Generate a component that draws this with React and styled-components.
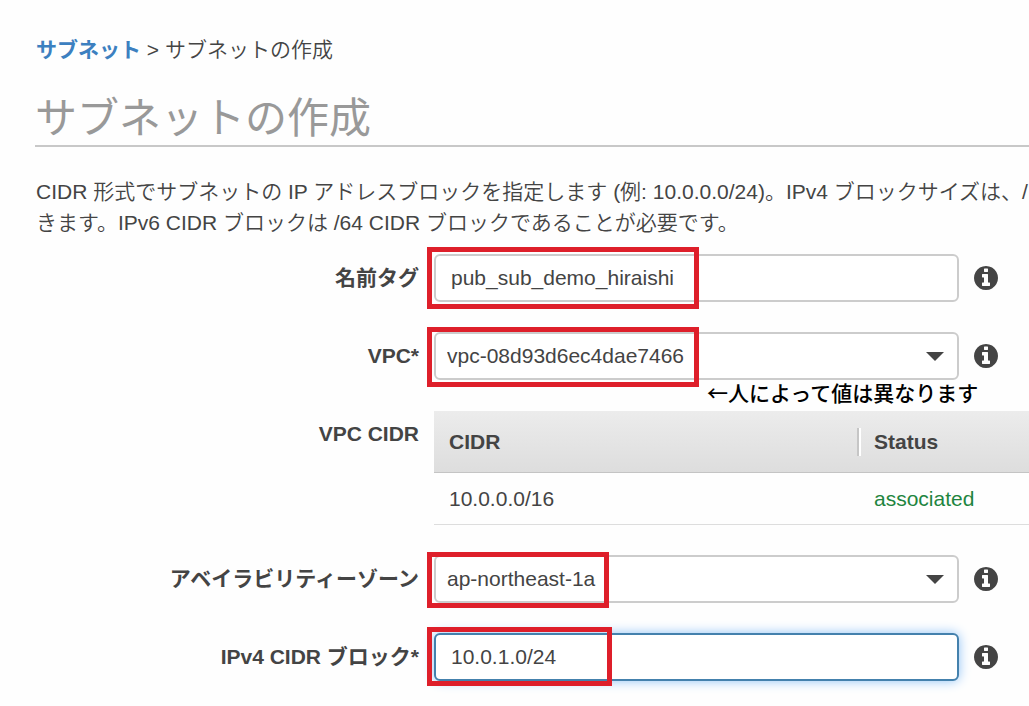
import { React, useState } from "react";
import styled, { createGlobalStyle, css } from "styled-components";

const App = () => {
  const [nameTag, setNameTag] = useState("pub_sub_demo_hiraishi");
  const [vpc, setVpc] = useState("vpc-08d93d6ec4dae7466");
  const [zone, setZone] = useState("ap-northeast-1a");
  const [cidrBlock, setCidrBlock] = useState("10.0.1.0/24");

  return (
    <>
      <GlobalStyle />
      <Page>
        {/* パンくずリスト */}
        <Breadcrumb>
          <BreadcrumbLink href="#subnets">サブネット</BreadcrumbLink> &gt; サブネットの作成
        </Breadcrumb>
        <Headline>サブネットの作成</Headline>
        {/* 説明文 */}
        <Description>
          CIDR 形式でサブネットの IP アドレスブロックを指定します (例: 10.0.0.0/24)。IPv4 ブロックサイズは、/
          <br />
          きます。IPv6 CIDR ブロックは /64 CIDR ブロックであることが必要です。
        </Description>

        <Form>
          {/* 名前タグ */}
          <Label htmlFor="name-tag">名前タグ</Label>
          <Field>
            <Control>
              <TextInput id="name-tag" value={nameTag} onChange={(e) => setNameTag(e.target.value)} />
              <Highlight $top={-7} $width={272} $height={62} />
            </Control>
            <InfoButton />
          </Field>

          {/* VPC */}
          <Label htmlFor="vpc">VPC*</Label>
          <Field>
            <Control>
              <Select id="vpc" value={vpc} onChange={(e) => setVpc(e.target.value)}>
                <option>vpc-08d93d6ec4dae7466</option>
              </Select>
              <Caret />
              <Highlight $top={-5} $width={272} $height={60} />
              <Note>←人によって値は異なります</Note>
            </Control>
            <InfoButton />
          </Field>

          {/* VPC CIDR 一覧 */}
          <Label as="span" id="vpc-cidr">VPC CIDR</Label>
          <CidrTable aria-labelledby="vpc-cidr">
            <thead>
              <tr>
                <HeadCell>CIDR</HeadCell>
                <HeadCell $status>
                  <Divided>Status</Divided>
                </HeadCell>
              </tr>
            </thead>
            <tbody>
              <tr>
                <Cell>10.0.0.0/16</Cell>
                <Cell $status>associated</Cell>
              </tr>
            </tbody>
          </CidrTable>

          {/* アベイラビリティーゾーン */}
          <Label htmlFor="zone">アベイラビリティーゾーン</Label>
          <Field>
            <Control>
              <Select id="zone" value={zone} onChange={(e) => setZone(e.target.value)}>
                <option>ap-northeast-1a</option>
              </Select>
              <Caret />
              <Highlight $top={-3} $width={182} $height={56} />
            </Control>
            <InfoButton />
          </Field>

          {/* IPv4 CIDR ブロック */}
          <Label htmlFor="cidr-block">IPv4 CIDR ブロック*</Label>
          <Field>
            <Control>
              <TextInput
                id="cidr-block"
                $active
                value={cidrBlock}
                onChange={(e) => setCidrBlock(e.target.value)}
              />
              <Highlight $top={-6} $width={185} $height={59} />
            </Control>
            <InfoButton />
          </Field>
        </Form>
      </Page>
    </>
  );
};

const InfoButton = () => (
  <IconButton type="button" aria-label="情報">
    <svg width="24" height="24" viewBox="128 128 1536 1536" fill="currentColor">
      <path d="M1152 1376v-160q0-14-9-23t-23-9h-96v-512q0-14-9-23t-23-9h-320q-14 0-23 9t-9 23v160q0 14 9 23t23 9h96v320h-96q-14 0-23 9t-9 23v160q0 14 9 23t23 9h448q14 0 23-9t9-23zM1024 480v-160q0-14-9-23t-23-9h-192q-14 0-23 9t-9 23v160q0 14 9 23t23 9h192q14 0 23-9t9-23zM1664 896q0 209-103 385.5t-279.5 279.5-385.5 103-385.5-103-279.5-279.5-103-385.5 103-385.5 279.5-279.5 385.5-103 385.5 103 279.5 279.5 103 385.5z" />
    </svg>
  </IconButton>
);

const Caret = () => (
  <CaretIcon width="18" height="9" viewBox="0 0 18 9" fill="currentColor">
    <path d="M0 0h18L9 9z" />
  </CaretIcon>
);

const GlobalStyle = createGlobalStyle`
  * {
    box-sizing: border-box;
  }
  body {
    margin: 0;
    background-color: #fefefe;
    color: #444444;
    font-family: "Liberation Sans", "Noto Sans CJK JP", sans-serif;
    font-size: 21px;
    font-weight: 350;
    line-height: 31px;
  }
`;

const Page = styled.main`
  padding: 34px 0px 24px 35px;
  overflow-x: hidden;
`;

const Breadcrumb = styled.nav`
  padding-left: 1px;
  white-space: nowrap;
`;

const BreadcrumbLink = styled.a`
  color: #3c80c0;
  font-weight: 700;
  text-decoration: none;
`;

const Headline = styled.h1`
  margin: 28px 0px 29px;
  border-bottom: 2px solid #c8c8c8;
  color: #999999;
  font-size: 42px;
  font-weight: 400;
  line-height: 52px;
`;

const Description = styled.p`
  margin: 0px 0px 16px;
  padding-left: 1px;
  white-space: nowrap;
`;

const Form = styled.form`
  display: grid;
  grid-template-columns: 384px minmax(0, 1fr);
  column-gap: 15px;
  row-gap: 30px;
  align-items: start;
`;

const Label = styled.label`
  font-weight: 700;
  line-height: 48px;
  text-align: right;
`;

const Field = styled.div`
  display: flex;
  align-items: center;
  gap: 15px;
  padding-right: 31px;
`;

const Control = styled.div`
  position: relative;
  flex: 1;
`;

const controlStyle = css`
  display: block;
  width: 100%;
  height: 48px;
  border: 2px solid #cccccc;
  border-radius: 6px;
  background-color: white;
  color: #444444;
  font: inherit;
  outline: none;
`;

const TextInput = styled.input`
  ${controlStyle}
  padding: 0px 15px;
  ${({ $active }) =>
    $active &&
    css`
      border-color: #4481ad;
      box-shadow: 0px 0px 12px #8fc3f7;
    `}
`;

const Select = styled.select`
  ${controlStyle}
  appearance: none;
  padding: 0px 40px 2px 11px;
`;

const CaretIcon = styled.svg`
  position: absolute;
  top: 20px;
  right: 15px;
  pointer-events: none;
`;

// 赤枠
const Highlight = styled.div`
  position: absolute;
  top: ${({ $top }) => $top}px;
  left: -7px;
  width: ${({ $width }) => $width}px;
  height: ${({ $height }) => $height}px;
  border: 5px solid #de1f2a;
  pointer-events: none;
`;

// 注釈
const Note = styled.span`
  position: absolute;
  top: 45px;
  left: 273px;
  color: black;
  font-family: "Noto Sans CJK JP", sans-serif;
  font-weight: 500;
  white-space: nowrap;
`;

const IconButton = styled.button`
  display: flex;
  padding: 0px;
  border: 0px;
  background: none;
  color: #444444;
`;

const CidrTable = styled.table`
  width: 100%;
  margin-top: 1px;
  border-collapse: separate;
  border-spacing: 0px;
  table-layout: fixed;

  & thead tr {
    background: linear-gradient(#ececec, #dddddd);
  }
`;

const HeadCell = styled.th`
  width: ${({ $status }) => ($status ? "172px" : "auto")};
  height: 62px;
  padding: ${({ $status }) => ($status ? "0px" : "0px 15px")};
  border-bottom: 1px solid #c4c4c4;
  font-weight: 700;
  text-align: left;
`;

const Divided = styled.span`
  display: block;
  padding-left: 15px;
  border-left: 2px solid #c6c6c6;
  box-shadow: inset 2px 0px white;
  line-height: 28px;
`;

const Cell = styled.td`
  height: 52px;
  padding: ${({ $status }) => ($status ? "0px 17px" : "0px 15px")};
  border-bottom: 1px solid #dddddd;
  color: ${({ $status }) => ($status ? "#1e8540" : "inherit")};
`;

export default App;
